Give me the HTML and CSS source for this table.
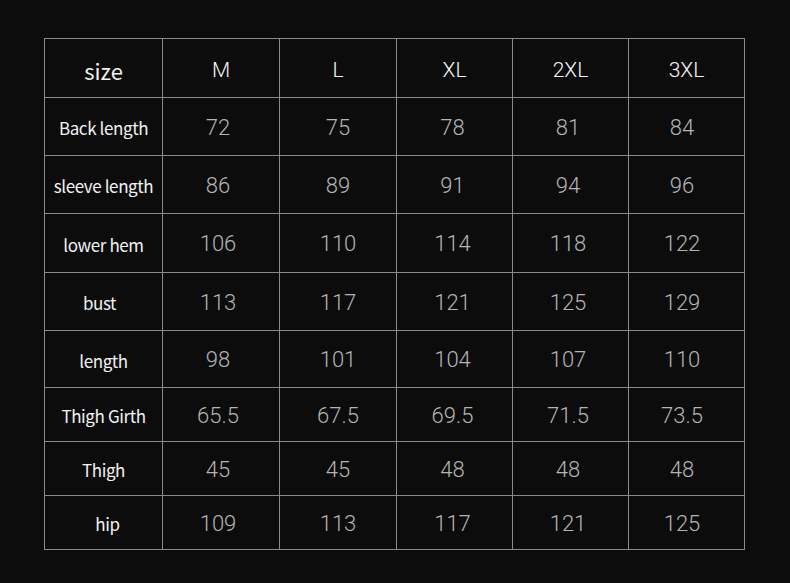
FILE: index.html
```html
<!DOCTYPE html>
<html>
<head>
<meta charset="utf-8">
<link rel="stylesheet" href="styles.css">
</head>
<body>
<div class="sheet">
  <div class="chart">
    <div class="cell lab head">size</div><div class="cell hnum">M</div><div class="cell hnum">L</div><div class="cell hnum">XL</div><div class="cell hnum">2XL</div><div class="cell hnum">3XL</div>
    <div class="cell lab">Back length</div><div class="cell num">72</div><div class="cell num">75</div><div class="cell num">78</div><div class="cell num">81</div><div class="cell num">84</div>
    <div class="cell lab">sleeve length</div><div class="cell num">86</div><div class="cell num">89</div><div class="cell num">91</div><div class="cell num">94</div><div class="cell num">96</div>
    <div class="cell lab">lower hem</div><div class="cell num">106</div><div class="cell num">110</div><div class="cell num">114</div><div class="cell num">118</div><div class="cell num">122</div>
    <div class="cell lab nudge-l">bust</div><div class="cell num">113</div><div class="cell num">117</div><div class="cell num">121</div><div class="cell num">125</div><div class="cell num">129</div>
    <div class="cell lab">length</div><div class="cell num">98</div><div class="cell num">101</div><div class="cell num">104</div><div class="cell num">107</div><div class="cell num">110</div>
    <div class="cell lab">Thigh Girth</div><div class="cell num">65.5</div><div class="cell num">67.5</div><div class="cell num">69.5</div><div class="cell num">71.5</div><div class="cell num">73.5</div>
    <div class="cell lab">Thigh</div><div class="cell num">45</div><div class="cell num">45</div><div class="cell num">48</div><div class="cell num">48</div><div class="cell num">48</div>
    <div class="cell lab nudge-r">hip</div><div class="cell num">109</div><div class="cell num">113</div><div class="cell num">117</div><div class="cell num">121</div><div class="cell num">125</div>
  </div>
</div>
</body>
</html>
```
FILE: styles.css
```css
html, body {
  margin: 0;
  padding: 0;
  background: #0c0c0c;
}
.sheet {
  width: 790px;
  height: 583px;
  padding: 38px 0 0 44px;
  box-sizing: border-box;
  background: #0c0c0c;
}
.chart {
  display: grid;
  grid-template-columns: 117px 116px 116px 115px 115px 115px;
  grid-template-rows: 58px 57px 57px 58px 57px 56px 53px 53px 53px;
  gap: 1px;
  border: 1px solid #8a8a8a;
  background: #8a8a8a;
  width: max-content;
}
.cell {
  background: #0c0c0c;
  display: flex;
  align-items: center;
  justify-content: center;
}
.lab {
  font-family: "Noto Sans CJK SC", "Noto Sans", sans-serif;
  font-size: 17px;
  letter-spacing: -0.4px;
  color: #f2f2f2;
  padding-top: 2px;
}
.nudge-l {
  padding-right: 8px;
}
.nudge-r {
  padding-left: 8px;
}
.head {
  font-size: 22px;
  letter-spacing: 0;
  padding-top: 3px;
}
.hnum {
  font-family: Roboto, "Liberation Sans", sans-serif;
  font-weight: 300;
  font-size: 21px;
  color: #f4f4f4;
  padding-top: 3px;
}
.num {
  font-family: Roboto, "Liberation Sans", sans-serif;
  font-weight: 300;
  font-size: 22px;
  color: #b4b4b4;
  padding-top: 1px;
}
.num:nth-child(6n+2) {
  padding-right: 6px;
}
.num:nth-child(6n+4) {
  padding-right: 4px;
}
.num:nth-child(6n+5) {
  padding-right: 5px;
}
.num:nth-child(6n) {
  padding-right: 9px;
}
```
